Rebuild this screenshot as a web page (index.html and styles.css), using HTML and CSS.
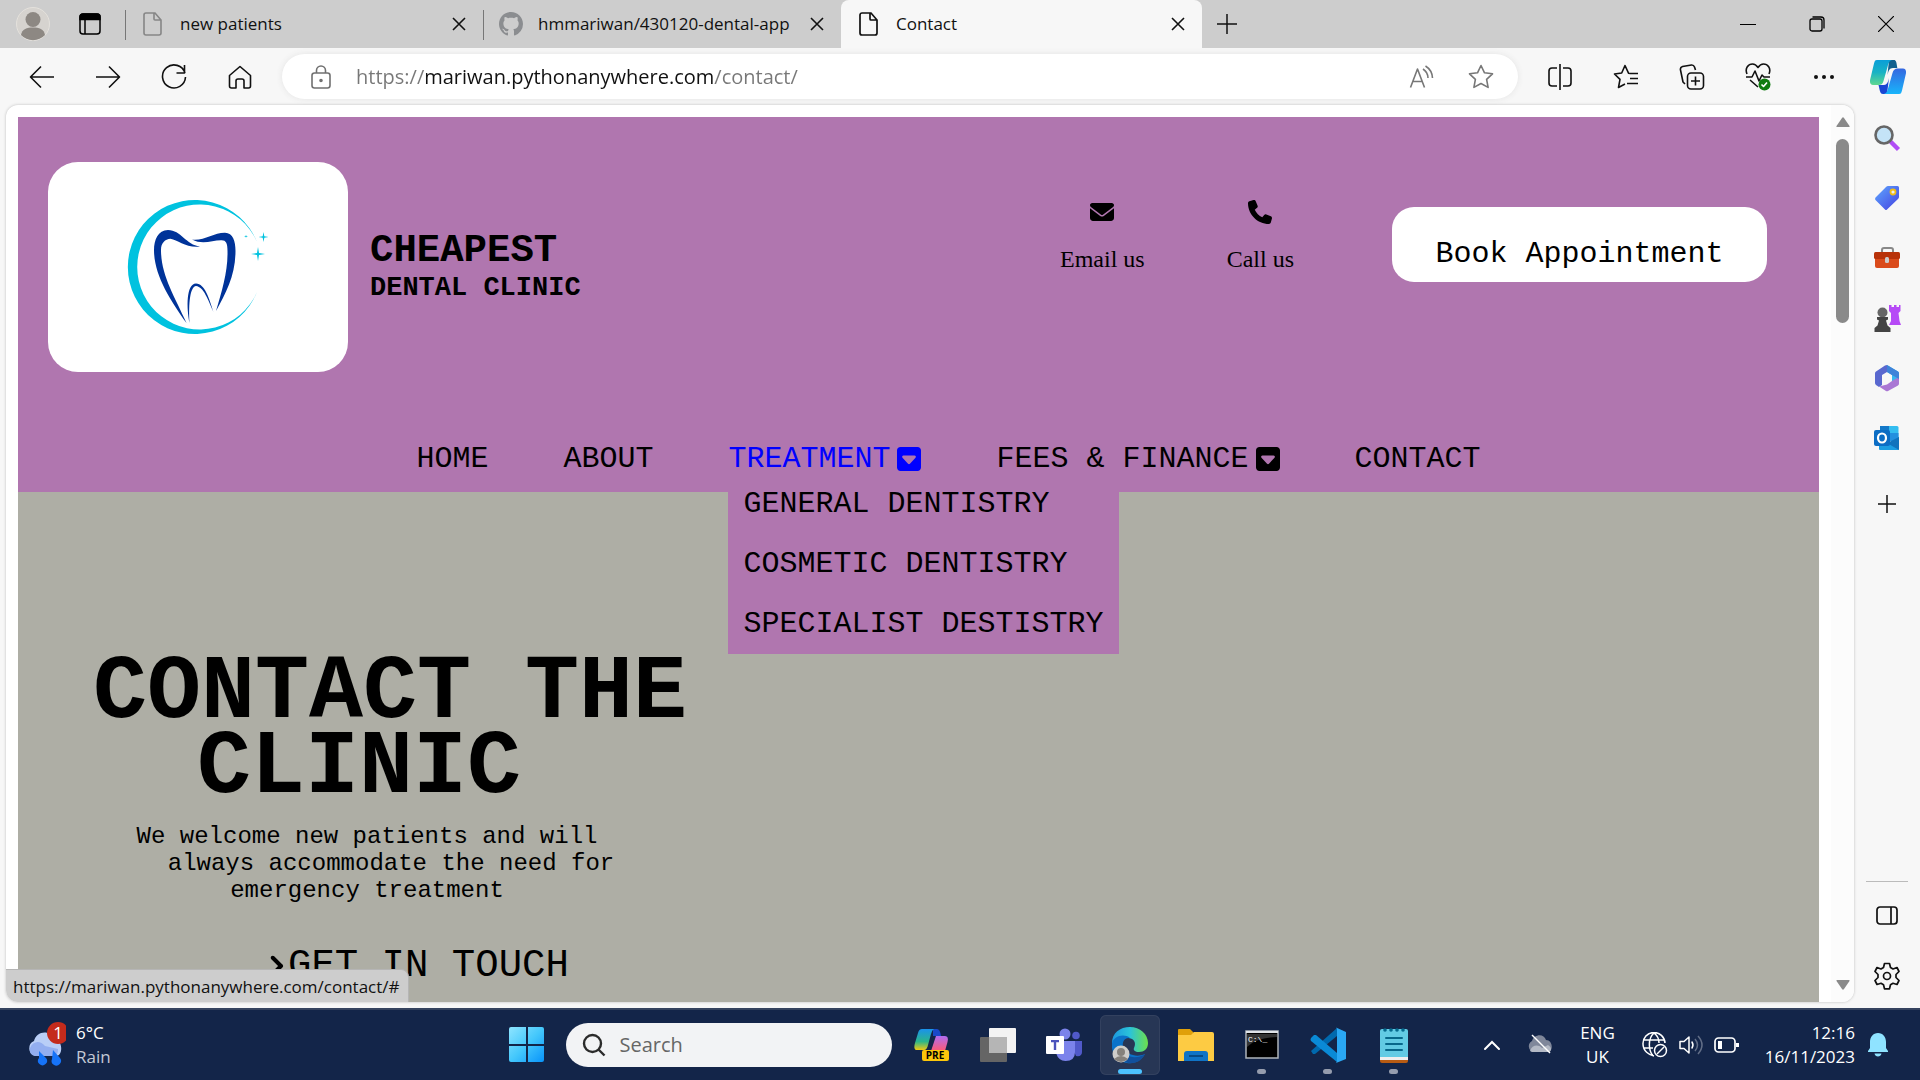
FILE: index.html
```html
<!DOCTYPE html>
<html lang="en">
<head>
<meta charset="utf-8">
<meta name="viewport" content="width=device-width, initial-scale=1">
<title>Contact</title>
<link rel="stylesheet" href="styles.css">
</head>
<body>
<div class="titlebar">
  <div class="title-tools">
    <button class="profile" aria-label="Profile">
      <svg width="34" height="34" viewBox="0 0 34 34"><circle cx="17" cy="17" r="16.500" fill="#d6d3cf" stroke="#e4e1dc"/><circle cx="17" cy="12.500" r="7.500" fill="#8d8883"/><path d="M5 28c1-6 6-7.500 12-7.500S28 22 29 28a16.500 16.500 0 0 1-24 0z" fill="#8d8883"/></svg>
    </button>
    <button class="tab-menu" aria-label="Tab actions">
      <svg width="22" height="22" viewBox="0 0 22 22" fill="none" stroke="#000" stroke-width="1.500"><rect x="1" y="1" width="20" height="20" rx="3"/><path d="M1 4a3 3 0 0 1 3-3h14a3 3 0 0 1 3 3v2.500H1z" fill="#000"/><path d="M6 6v15"/></svg>
    </button>
  </div>
  <div class="tab">
    <svg class="tab-icon" width="24" height="24" viewBox="0 0 24 24" fill="none" stroke="#868686" stroke-width="1.600"><path d="M5 1h9l6 7v13a2 2 0 0 1-2 2H5a2 2 0 0 1-2-2V3a2 2 0 0 1 2-2zM13 1v6a1 1 0 0 0 1 1h6"/></svg>
    <span class="tab-name">new patients</span>
    <button class="tab-close" aria-label="Close new patients"><svg width="14" height="14" viewBox="0 0 14 14" stroke="#111" stroke-width="1.600"><path d="M1 1l12 12M13 1L1 13"/></svg></button>
  </div>
  <div class="tab tab-last">
    <svg class="tab-icon" width="24" height="24" viewBox="0 0 16 16" fill="#8b8d90"><path d="M8 0C3.580 0 0 3.580 0 8c0 3.540 2.290 6.530 5.470 7.590.4.070.55-.17.55-.38 0-.19-.01-.82-.01-1.490-2.010.37-2.530-.49-2.690-.94-.09-.23-.48-.94-.82-1.130-.28-.15-.68-.52-.01-.53.63-.01 1.080.58 1.230.82.72 1.210 1.870.87 2.330.66.07-.52.28-.87.51-1.070-1.780-.2-3.640-.89-3.640-3.950 0-.87.31-1.590.82-2.150-.08-.2-.36-1.020.08-2.120 0 0 .67-.21 2.200.82.64-.18 1.320-.27 2-.27s1.360.09 2 .27c1.530-1.040 2.200-.82 2.200-.82.44 1.100.16 1.920.08 2.120.51.56.82 1.270.82 2.150 0 3.070-1.870 3.750-3.650 3.950.29.25.54.73.54 1.480 0 1.070-.01 1.930-.01 2.200 0 .21.15.46.55.38A8.010 8.010 0 0 0 16 8c0-4.420-3.580-8-8-8z"/></svg>
    <span class="tab-name">hmmariwan/430120-dental-app</span>
    <button class="tab-close" aria-label="Close hmmariwan"><svg width="14" height="14" viewBox="0 0 14 14" stroke="#111" stroke-width="1.600"><path d="M1 1l12 12M13 1L1 13"/></svg></button>
  </div>
  <div class="tab tab-active">
    <svg class="tab-icon" width="24" height="24" viewBox="0 0 24 24" fill="none" stroke="#111" stroke-width="1.700"><path d="M5 1h9l6 7v13a2 2 0 0 1-2 2H5a2 2 0 0 1-2-2V3a2 2 0 0 1 2-2zM13 1v6a1 1 0 0 0 1 1h6"/></svg>
    <span class="tab-name">Contact</span>
    <button class="tab-close" aria-label="Close Contact"><svg width="14" height="14" viewBox="0 0 14 14" stroke="#111" stroke-width="1.600"><path d="M1 1l12 12M13 1L1 13"/></svg></button>
  </div>
  <button class="new-tab" aria-label="New tab"><svg width="22" height="22" viewBox="0 0 22 22" stroke="#111" stroke-width="1.500"><path d="M11 1v20M1 11h20"/></svg></button>
  <div class="window-buttons">
    <button aria-label="Minimise"><svg width="16" height="16" viewBox="0 0 16 16" stroke="#000"><path d="M0 8.500h16"/></svg></button>
    <button aria-label="Restore"><svg width="16" height="16" viewBox="0 0 16 16" fill="none" stroke="#000" stroke-width="1.300"><rect x="1" y="3" width="12" height="12" rx="2"/><path d="M3.500 1H12a3 3 0 0 1 3 3v8.500"/></svg></button>
    <button aria-label="Close window"><svg width="16" height="16" viewBox="0 0 16 16" stroke="#000" stroke-width="1.200"><path d="M0 0l16 16M16 0L0 16"/></svg></button>
  </div>
</div>

<div class="toolbar">
  <button class="tool" aria-label="Back"><svg width="26" height="24" viewBox="0 0 26 24"><path d="M25 12H2M12 1.500L1.500 12 12 22.500"/></svg></button>
  <button class="tool" aria-label="Forward"><svg width="26" height="24" viewBox="0 0 26 24"><path d="M1 12h23M14 1.500L24.500 12 14 22.500"/></svg></button>
  <button class="tool" aria-label="Refresh"><svg width="26" height="26" viewBox="0 0 26 26"><path d="M24 9A11.500 11.500 0 1 0 24.500 13M23.500 1v8h-8"/></svg></button>
  <button class="tool" aria-label="Home"><svg width="24" height="24" viewBox="0 0 24 24"><path d="M1.500 10.500L12 1.500l10.500 9V21a2 2 0 0 1-2 2H16v-7a2 2 0 0 0-2-2h-4a2 2 0 0 0-2 2v7H3.500a2 2 0 0 1-2-2z"/></svg></button>
  <form class="address" onsubmit="return false">
    <svg class="lock" width="20" height="24" viewBox="0 0 20 24" fill="none" stroke="#707070" stroke-width="1.600"><rect x="1" y="8" width="18" height="15" rx="2.500"/><path d="M5.500 8V5.500a4.500 4.500 0 0 1 9 0V8"/><circle cx="10" cy="15.500" r="1" fill="#707070"/></svg>
    <input class="url" type="text" aria-label="Address" value="https://mariwan.pythonanywhere.com/contact/">
    <button class="address-button" aria-label="Read aloud"><svg width="26" height="24" viewBox="0 0 26 24"><path d="M1.500 22.500L8.500 4l7 18.500M4 16.500h9M14 4a11 11 0 0 1 5 9M16.500 1a15 15 0 0 1 7 12"/></svg></button>
    <button class="address-button" aria-label="Add to favourites"><svg width="26" height="26" viewBox="0 0 26 26"><path d="M13 1.500l3.500 7.300 8 1-5.900 5.600 1.500 8-7.100-3.900-7.100 3.900 1.500-8L1.500 9.800l8-1z"/></svg></button>
  </form>
  <button class="tool" aria-label="Split screen"><svg width="24" height="26" viewBox="0 0 24 26"><path d="M12 0v26M9 4H4a3 3 0 0 0-3 3v12a3 3 0 0 0 3 3h5M15 4h5a3 3 0 0 1 3 3v12a3 3 0 0 1-3 3h-5"/></svg></button>
  <button class="tool" aria-label="Favourites"><svg width="26" height="26" viewBox="0 0 26 26"><path d="M17 9.500l-1.500-.3L12 1.500 8.700 9 1.500 10l5.500 5.400-1.500 8.100L12 20M17 9.500h8M17 14.500h8M14 19.500h11"/></svg></button>
  <button class="tool" aria-label="Collections"><svg width="26" height="26" viewBox="0 0 26 26"><path d="M6 20l-2-2L1.500 6a3 3 0 0 1 2-3.500l9-1.500a3 3 0 0 1 3 2l1 3"/><rect x="8.500" y="9" width="16" height="16" rx="3.500"/><path d="M16.500 12.500v9M12 17h9"/></svg></button>
  <button class="tool" aria-label="Browser essentials"><svg width="26" height="28" viewBox="0 0 26 28"><path d="M2 11C-.5 5 3.500 1 7.500 1c3 0 4.500 2 5.500 3.500C14 3 15.500 1 18.500 1c4 0 8 4 5.500 10M1 14h6l3-6 4 10 3-6 2 2h6M5 17l8 7"/><circle cx="19.500" cy="21.500" r="6" fill="#107c10" stroke="none"/><path d="M16.500 21.500l2 2 3.500-4" stroke="#fff"/></svg></button>
  <button class="tool" aria-label="Settings and more"><svg width="22" height="6" viewBox="0 0 22 6"><g fill="#111" stroke="none"><circle cx="3" cy="3" r="2"/><circle cx="11" cy="3" r="2"/><circle cx="19" cy="3" r="2"/></g></svg></button>
  <button class="copilot" aria-label="Copilot"><svg width="36" height="34" viewBox="0 0 36 34"><defs><linearGradient id="ca" x1="0" y1="0" x2="0" y2="1"><stop offset="0" stop-color="#0a9ed8"/><stop offset=".5" stop-color="#19b3c4"/><stop offset="1" stop-color="#60d890"/></linearGradient><linearGradient id="cb" x1="0" y1="0" x2="0" y2="1"><stop offset="0" stop-color="#3567e0"/><stop offset="1" stop-color="#18b5fb"/></linearGradient></defs><path d="M19 0h5c2 0 2.500 2 3.300 8H23c-4 0-4.500 3-5.500 7z" fill="#10608f"/><path d="M17 34h-4c-3 0-3-3-4.500-9H14c3 0 4-3 5-7z" fill="#1b46d3"/><path d="M7 0h15c-3 1-3.700 4-4.500 7l-4 14c-.8 3-2.500 4-5 4H3c-3 0-3.500-3-2.700-6L4 3.500C4.700 1 5 0 7 0z" fill="url(#ca)"/><path d="M29 34H14c3-1 3.700-4 4.500-7l4-14c.8-3 2.500-4.500 5-4.500H33c3 0 3.500 3 2.700 6L32 30.500C31.300 33 31 34 29 34z" fill="url(#cb)"/></svg></button>
</div>

<div class="workspace">
  <div class="viewport">
    <div class="document">
      <header class="site-header">
        <div class="header-top">
          <a class="logo" href="#" aria-label="Cheapest Dental Clinic">
            <svg width="300" height="210" viewBox="0 -1 300 210"><path fill="#00c2df" d="M209 79A67 67 0 1 0 209 129A62.500 62.500 0 1 1 209 79Z"/><g fill="#003399"><path d="M152 83.500C138 82 133 67 120 67C110 67 106 77 106 87C106 112 122 137 138.500 160C126 132 113 112 113 87C113 80 117 76 122.500 75.700C130 77 138 85 152 83.500Z"/><path d="M144 76.500C156 78 166 69.500 177 69.700C185 70 187.500 78 187.500 88C187.500 112 178 130 168 148C174 128 180 108 179.500 88C179.500 80 178 77 173 77.300C164 77.500 154 82 144 76.500Z"/><path d="M141.500 160C138.500 145 138 121 148 120.500C157 121 161 135 165.500 149C160 137 156 124 148 123C142 124 140.500 140 141.500 160Z"/></g><path fill="#00c2df" d="M210 84l1 6 6 1-6 1-1 6-1-6-6-1 6-1zM215.500 69l.8 4.200 4.200.8-4.200.8-.8 4.200-.8-4.200-4.200-.8 4.200-.8zM198 72l.5 1 1.500.3-1.500.4-.5 1-.5-1-1.500-.4 1.500-.3z"/></svg>
          </a>
          <div class="brand"><span class="brand-name">CHEAPEST</span><span class="brand-kind">DENTAL CLINIC</span></div>
          <div class="contacts">
            <a class="contact" href="#"><svg width="24" height="24" viewBox="0 0 512 512"><path d="M48 64C21.500 64 0 85.500 0 112c0 15.100 7.100 29.300 19.200 38.400L236.800 313.600c11.400 8.500 27 8.500 38.400 0L492.800 150.400c12.100-9.100 19.200-23.300 19.200-38.400c0-26.500-21.500-48-48-48H48zM0 176V384c0 35.300 28.700 64 64 64H448c35.300 0 64-28.700 64-64V176L294.400 339.200c-22.800 17.100-54 17.100-76.800 0L0 176z"/></svg>Email us</a>
            <a class="contact" href="#"><svg width="24" height="24" viewBox="0 0 512 512"><path d="M164.900 24.600c-7.700-18.600-28-28.500-47.400-23.200l-88 24C12.100 30.200 0 46 0 64C0 311.400 200.600 512 448 512c18 0 33.800-12.100 38.600-29.500l24-88c5.300-19.400-4.600-39.700-23.200-47.400l-96-40c-16.300-6.800-35.200-2.100-46.300 11.600L304.700 368C234.300 334.700 177.300 277.700 144 207.300L193.300 167c13.700-11.200 18.400-30 11.600-46.300l-40-96z"/></svg>Call us</a>
          </div>
          <button class="book">Book Appointment</button>
        </div>
        <nav class="menu">
          <a href="#">HOME</a>
          <a href="#">ABOUT</a>
          <div class="menu-group">
            <a class="menu-open" href="#">TREATMENT<svg width="24" height="24" viewBox="0 32 448 448"><path d="M384 480c35.300 0 64-28.700 64-64l0-320c0-35.300-28.700-64-64-64L64 32C28.700 32 0 60.700 0 96L0 416c0 35.300 28.700 64 64 64l320 0zM224 352c-6.700 0-13-2.800-17.600-7.700l-104-112c-6.500-7-8.200-17.200-4.400-25.900s12.500-14.400 22-14.400l208 0c9.500 0 18.200 5.700 22 14.400s2.100 18.900-4.400 25.900l-104 112c-4.500 4.900-10.900 7.700-17.600 7.700z"/></svg></a>
            <div class="dropdown">
              <a href="#">GENERAL DENTISTRY</a>
              <a href="#">COSMETIC DENTISTRY</a>
              <a href="#">SPECIALIST DESTISTRY</a>
            </div>
          </div>
          <a href="#">FEES &amp; FINANCE<svg width="24" height="24" viewBox="0 32 448 448"><path d="M384 480c35.300 0 64-28.700 64-64l0-320c0-35.300-28.700-64-64-64L64 32C28.700 32 0 60.700 0 96L0 416c0 35.300 28.700 64 64 64l320 0zM224 352c-6.700 0-13-2.800-17.600-7.700l-104-112c-6.500-7-8.200-17.200-4.400-25.900s12.500-14.400 22-14.400l208 0c9.500 0 18.200 5.700 22 14.400s2.100 18.900-4.400 25.900l-104 112c-4.500 4.900-10.900 7.700-17.600 7.700z"/></svg></a>
          <a href="#">CONTACT</a>
        </nav>
      </header>
      <main class="hero">
        <h1><span class="title-lead">CONTACT THE</span><span>CLINIC</span></h1>
        <p class="intro"><span>We welcome new patients and will</span><span class="intro-inset">always accommodate the need for</span><span>emergency treatment</span></p>
        <a class="touch" href="#"><svg width="14" height="22" viewBox="60 0 270 512"><path d="M310.600 233.400c12.500 12.500 12.500 32.800 0 45.300l-192 192c-12.500 12.500-32.800 12.500-45.300 0s-12.500-32.800 0-45.300L242.700 256 73.400 86.600c-12.500-12.500-12.500-32.800 0-45.300s32.800-12.500 45.300 0l192 192z"/></svg>GET IN TOUCH</a>
      </main>
    </div>
    <div class="scrollbar"><svg width="14" height="10" viewBox="0 0 14 10" fill="#8a8a8a"><path d="M6 1q1-1.500 2 0l5.500 8q.4 1-.6 1H1.100Q.1 10 .5 9z"/></svg><div class="thumb"></div><svg width="14" height="10" viewBox="0 0 14 10" fill="#8a8a8a"><path d="M6 9q1 1.500 2 0l5.500-8q.4-1-.6-1H1.100Q.1 0 .5 1z"/></svg></div>
    <div class="status">https://mariwan.pythonanywhere.com/contact/#</div>
  </div>

  <aside class="sidebar">
    <button aria-label="Search"><svg width="28" height="28" viewBox="0 0 28 28"><path d="M17.500 17.500l8 8" stroke="#b04df5" stroke-width="4.500"/><circle cx="11" cy="11" r="8.500" fill="#c4e3f7" stroke="#666" stroke-width="2.600"/></svg></button>
    <button aria-label="Shopping"><svg width="28" height="28" viewBox="0 0 28 28"><defs><linearGradient id="tg" x1="0" y1="0" x2="1" y2="1"><stop offset="0" stop-color="#5fa8ff"/><stop offset="1" stop-color="#4340e0"/></linearGradient></defs><path d="M15 2h9.500A1.500 1.500 0 0 1 26 3.500V13q0 1-1 2L14 25.500q-1 1-2 0L2.500 16q-1-1 0-2.500L13 3q1-1 2-1z" fill="url(#tg)"/><circle cx="20" cy="8" r="2.500" fill="#eee" stroke="#f2bd17" stroke-width="1.800"/></svg></button>
    <button aria-label="Tools"><svg width="28" height="28" viewBox="0 0 28 28"><path d="M9 9V6q0-2 2-2h7q2 0 2 2v3" fill="none" stroke="#888" stroke-width="2"/><path d="M2 13h24v9q0 2-2 2H4q-2 0-2-2z" fill="#da4b1b"/><rect x="1" y="8" width="26" height="7" rx="1.500" fill="#b83209"/><rect x="12" y="13" width="4" height="6" rx="1.500" fill="#ccc"/></svg></button>
    <button aria-label="Games"><svg width="28" height="28" viewBox="0 0 28 28"><path d="M16 1h2.500v2h2.500V1h2.500v2H26V1h1.500v6l-2 2 1 8 1.500 4H16l2-4V9l-2-2z" fill="#b64af6"/><circle cx="9.500" cy="8.500" r="5" fill="#666"/><path d="M4 13h11v2.500l-2 1 1.500 5 3 2.500v4h-16v-4l3-2.500L6 16.500l-2-1z" fill="#444"/></svg></button>
    <button aria-label="Microsoft 365"><svg width="28" height="28" viewBox="0 0 28 28"><path d="M14 1l11 6.500q1 .5 1 2v10L19 17v-6l-5-3z" fill="#38b7ee"/><path d="M14 1v7l-5 3v10l-3 2-3-2q-1-1-1-2V9.500q0-1.500 1-2L12 1.500q1-.5 2-.5z" fill="#5968cf"/><path d="M26 13v6.500q0 1.500-1 2L15 27q-1 .5-2 0l-7-4.500 8-2 5-3.500z" fill="#aa77d4"/><path d="M14 1v7l5 3 7 4V9q0-1-1-1.500z" fill="#3f83d9"/></svg></button>
    <button aria-label="Outlook"><svg width="28" height="28" viewBox="0 0 28 28"><path d="M7 2h17q1.500 0 1.500 1.500V17H7z" fill="#34bdf0"/><path d="M7 2h9v7H7z" fill="#1479c9"/><path d="M16 9h9.500v8H16z" fill="#2390df"/><path d="M6 17l10 2 10-6v12q0 1-1 1H7q-1 0-1-1z" fill="#1b9de2"/><path d="M14 19l12 7V13z" fill="#1173bd"/><rect x="1" y="6" width="16" height="16" rx="2" fill="#0c6dc4"/><ellipse cx="9" cy="14" rx="4" ry="4.500" fill="none" stroke="#fff" stroke-width="2.200"/></svg></button>
    <button class="customise" aria-label="Customise"><svg width="20" height="20" viewBox="0 0 20 20" stroke="#111" stroke-width="1.500"><path d="M10 1v18M1 10h18"/></svg></button>
    <div class="side-rule"></div>
    <button aria-label="Hide sidebar"><svg width="22" height="20" viewBox="0 0 22 20" fill="none" stroke="#111" stroke-width="1.700"><rect x="1" y="1" width="20" height="17" rx="3"/><path d="M15 1v17"/></svg></button>
    <button aria-label="Settings"><svg width="26" height="28" viewBox="0 0 26 28" fill="none" stroke="#111" stroke-width="1.700" stroke-linejoin="round"><path d="M10.500 1.500h5l1 4 2.500 1.500 4-1.500L25 9.500 22 12.500v3l3 3-2 4-4-1.200-2.500 1.500-1 4h-5l-1-4L7 21.300 3 22.500l-2-4 3-3v-3l-3-3 2-4L7 7l2.500-1.500z"/><circle cx="13" cy="14" r="3.500"/></svg></button>
  </aside>
</div>

<footer class="taskbar">
  <button class="weather">
    <svg width="38" height="46" viewBox="0 0 38 46"><path d="M7 34a8 8 0 0 1-1-15C8 9 22 7 26 17c8 0 10 15 3 17z" fill="#b9cef7"/><path d="M2 26c3-7 10-8 15-2l13 3c0 4-1 6-4 7H8c-4 0-7-3-6-8z" fill="#93aef0"/><path d="M11 29l7 7a4.500 4.500 0 1 1-7 0zM25 28l7 8a4.700 4.700 0 1 1-8 1z" fill="#1673f8"/><circle cx="30" cy="11" r="11" fill="#c42b1c"/><text x="30" y="17" fill="#fff" font-size="17" text-anchor="middle">1</text></svg>
    <span class="weather-text"><span>6°C</span><span class="faint">Rain</span></span>
  </button>
  <div class="apps">
    <button class="start" aria-label="Start"><svg width="36" height="36" viewBox="0 0 36 36"><defs><linearGradient id="wg" x1="0" y1="0" x2="1" y2="1"><stop offset="0" stop-color="#8fe5ff"/><stop offset=".5" stop-color="#45c8fc"/><stop offset="1" stop-color="#0894fa"/></linearGradient></defs><path fill="url(#wg)" d="M2 0h15v17H0V2q0-2 2-2zM19 0h14q2 0 2 2v15H19zM0 19h17v16H2q-2 0-2-2zM19 19h16v14q0 2-2 2H19z"/></svg></button>
    <label class="search"><svg width="24" height="24" viewBox="0 0 24 24" fill="none" stroke="#2b2b2b" stroke-width="2.400"><circle cx="10.500" cy="10.500" r="8.500"/><path d="M16.500 16.500l6 6"/></svg><input type="text" placeholder="Search" aria-label="Search"></label>
    <button class="app" aria-label="Copilot preview"><svg width="36" height="36" viewBox="0 0 36 36"><defs><linearGradient id="pa" x1="0" y1="0" x2="0" y2="1"><stop offset="0" stop-color="#1a92ec"/><stop offset=".6" stop-color="#2bb58a"/><stop offset="1" stop-color="#f2c811"/></linearGradient><linearGradient id="pb" x1="0" y1="0" x2="0" y2="1"><stop offset="0" stop-color="#b06cf0"/><stop offset="1" stop-color="#ff5a72"/></linearGradient></defs><path d="M19 2h4q3 0 4 7h-8z" fill="#1949c8"/><path d="M8 2h12q-2 1-3 5l-3 11q-1 5-4 5H3q-4 0-2-7L4 6q1-4 4-4z" fill="url(#pa)"/><path d="M22 9h9q4 0 2.500 6L31 24H17z" fill="url(#pb)"/><rect x="8" y="23" width="27" height="11" rx="2" fill="#fcc70b"/><text x="21" y="32" text-anchor="middle" font-size="10" font-weight="bold">PRE</text></svg></button>
    <button class="app" aria-label="Task view"><svg width="36" height="36" viewBox="0 0 36 36"><rect y="10" width="27" height="25" rx="1" fill="#656565"/><rect x="9" y="1" width="27" height="25" rx="1" fill="#f3f3f3"/><path d="M9 10h18v16H9z" fill="#b5b5b5"/></svg></button>
    <button class="app" aria-label="Teams"><svg width="36" height="36" viewBox="0 0 36 36"><circle cx="19" cy="7" r="5.500" fill="#7b83eb"/><circle cx="30" cy="8.500" r="3.800" fill="#5059c9"/><path d="M23 14h13v11q0 5-6 4z" fill="#5059c9"/><path d="M10 14h19v11q0 9-9.500 9-7 0-9.500-8z" fill="#7b83eb"/><rect y="9" width="18" height="18" rx="1" fill="#fff"/><path d="M5 13h8v2.300h-2.800V23H7.800v-7.700H5z" fill="#4b53bc"/></svg></button>
    <button class="app app-active" aria-label="Edge"><svg width="38" height="38" viewBox="0 0 38 38"><defs><linearGradient id="eg"><stop offset="0" stop-color="#1c97e0"/><stop offset=".5" stop-color="#2bc3d9"/><stop offset="1" stop-color="#6de04b"/></linearGradient></defs><path d="M1 17C1 7 9 1 19 1c10 0 18 7 18 16 0 6-4 9-9 9-4 0-6-2-5-4 3-6-1-10-6-10S2 14 1 19z" fill="url(#eg)"/><path d="M1 18c1-8 12-11 18-6-6-1-9 5-6 11 3 5 12 9 21 5-4 7-11 10-18 9C7 36 0 28 1 18z" fill="#0b72c9"/><path d="M13 20c-1 10 10 15 21 8-4 8-11 10-17 9-6-2-9-11-4-17z" fill="#11509c"/><circle cx="10" cy="28" r="8.500" fill="#cfcdca"/><circle cx="10" cy="26" r="4" fill="#85817c"/><path d="M3 33q7-6 14 0-7 6-14 0z" fill="#85817c"/></svg></button>
    <button class="app" aria-label="File Explorer"><svg width="36" height="36" viewBox="0 0 36 36"><path d="M0 3q0-1 1-1h11l4 4v8H0z" fill="#e0a009"/><path d="M0 8h13l3-3h18q2 0 2 2v27H0z" fill="#fdcb43"/><path d="M6 34V27q0-3 3-3h18q3 0 3 3v7z" fill="#1074c6"/><path d="M11 29h14" stroke="#084b85" stroke-width="2"/></svg></button>
    <button class="app app-open" aria-label="Command Prompt"><svg width="36" height="36" viewBox="0 0 36 36"><rect x="2" y="4" width="32" height="27" fill="#000" stroke="#aeb4ba" stroke-width="1.500"/><path d="M2 4h32v2H2z" fill="#dfe3e8"/><path d="M3 7h30v3Q12 11 3 20z" fill="#333"/><text class="prompt" x="4" y="15" font-size="8" fill="#fff">C:\_</text></svg></button>
    <button class="app app-open" aria-label="Visual Studio Code"><svg width="36" height="36" viewBox="0 0 36 36"><path d="M1 24l2 3h2L27 9V1z" fill="#0069ae"/><path d="M1 11l3-3h2l21 18v9L1 14q-1-1 0-3z" fill="#0a8ad6"/><path d="M26 .5L36 5v27l-10 4q1-1 1-3V3q0-2-1-2.500z" fill="#2aa8f4"/></svg></button>
    <button class="app app-open" aria-label="Notepad"><svg width="36" height="36" viewBox="0 0 36 36"><path d="M4 30h28v4q0 2-2 2H6q-2 0-2-2z" fill="#b75b13"/><path d="M4 27h28v6H4z" fill="#eee"/><path d="M6 2h24q2 0 2 2v26H4V4q0-2 2-2z" fill="#62cbe4"/><path d="M10 11h16M10 17h16M10 23h16" stroke="#07688b" stroke-width="2" stroke-linecap="round"/><g fill="#066a8e"><circle cx="9" cy="3" r="1.800"/><circle cx="15" cy="3" r="1.800"/><circle cx="21" cy="3" r="1.800"/><circle cx="27" cy="3" r="1.800"/></g></svg></button>
  </div>
  <div class="tray">
    <button aria-label="Hidden icons"><svg width="18" height="12" viewBox="0 0 18 12" fill="none" stroke="#fff" stroke-width="2" stroke-linecap="round"><path d="M2 10l7-7 7 7"/></svg></button>
    <button class="cloud" aria-label="OneDrive"><svg width="26" height="22" viewBox="0 0 26 22"><path d="M6 18a6 6 0 0 1-1-11C7 0 17-1 19 6c7 0 8 12 1 12z" fill="#7f879a"/><path d="M3 17c2-6 8-7 12-3l6-3c4 2 4 7 0 7H5z" fill="#b3b9c5"/><path d="M5 1l18 18" stroke="#fff" stroke-width="1.500"/></svg></button>
    <button class="language"><span>ENG</span><span>UK</span></button>
    <button class="system" aria-label="Network, volume and battery">
      <svg width="26" height="26" viewBox="0 0 26 26" fill="none" stroke="#fff" stroke-width="1.500"><path d="M12 24C7 23 1 19 1 12a11 11 0 0 1 22-1M2 8h20M2 16h9M11 24C6 18 6 6 12 1c4 3 5 6 5 10"/><circle cx="18.500" cy="18.500" r="6"/><path d="M15 22l7-7"/></svg>
      <svg width="26" height="22" viewBox="0 0 26 22" fill="none" stroke="#fff" stroke-width="1.500" stroke-linejoin="round"><path d="M2 7.500h4L11 3v16l-5-4.500H2z"/><path d="M14 8q2 3 0 6" stroke-linecap="round"/><path d="M17 5q5 6 0 12M20 2q8 9 0 18" stroke="#626e87"/></svg>
      <svg width="26" height="18" viewBox="0 0 26 18" fill="none" stroke="#fff" stroke-width="1.700"><rect x="1" y="2" width="20" height="14" rx="3.500"/><path d="M4 5h4v8H4z" fill="#fff" stroke="none"/><path d="M23.500 7v4" stroke-width="3"/></svg>
    </button>
    <button class="clock"><span>12:16</span><span>16/11/2023</span></button>
    <button class="bell" aria-label="Notifications"><svg width="20" height="24" viewBox="0 0 20 24" fill="#8fe3ff"><path d="M10 0c5 0 8 4 8 9v6l2 3v1H0v-1l2-3V9c0-5 3-9 8-9zM6.500 20.500h7c-.5 4-6.500 4-7 0z"/></svg></button>
  </div>
</footer>
</body>
</html>
```
FILE: styles.css
```css
* {
  box-sizing: border-box;
}

body {
  margin: 0;
  height: 100vh;
  display: flex;
  flex-direction: column;
  overflow: hidden;
  background: #f7f7f7;
  color: #111;
  font: 17px/24px "Open Sans", "Noto Sans", sans-serif;
}

button {
  margin: 0;
  padding: 0;
  border: 0;
  background: none;
  color: inherit;
  font: inherit;
  display: flex;
  align-items: center;
  justify-content: center;
}

a {
  color: inherit;
  text-decoration: none;
}

svg {
  display: block;
  flex: none;
}

/* Browser tabs */
.titlebar {
  flex: none;
  height: 48px;
  display: flex;
  background: #cdcdcd;
}

.title-tools {
  width: 125px;
  padding-left: 16px;
  display: flex;
  align-items: center;
  gap: 29px;
}

.tab {
  width: 358px;
  padding: 0 12px 0 16px;
  display: flex;
  align-items: center;
  gap: 15px;
  position: relative;
}

.tab::before {
  content: "";
  position: absolute;
  left: 0;
  top: 10px;
  width: 1px;
  height: 30px;
  background: #777;
}

.tab-active {
  width: 361px;
  border-radius: 8px 8px 0 0;
  background: #f7f7f7;
}

.tab-active::before {
  display: none;
}

.tab-name {
  flex: 1;
  white-space: nowrap;
}

.tab-close {
  width: 24px;
  height: 24px;
}

.new-tab {
  width: 50px;
}

.window-buttons {
  margin-left: auto;
  display: flex;
}

.window-buttons button {
  width: 69px;
}

/* Address bar and tools */
.toolbar {
  flex: none;
  height: 57px;
  padding: 0 2px 0 9px;
  display: flex;
  align-items: center;
}

.tool {
  width: 66px;
  height: 44px;
}

.tool svg {
  fill: none;
  stroke: #111;
  stroke-width: 1.6;
  stroke-linejoin: round;
}

.copilot {
  width: 61px;
}

.address {
  flex: 1;
  height: 45px;
  margin: 0 9px;
  padding: 0 8px 0 29px;
  display: flex;
  align-items: center;
  border-radius: 23px;
  background: #fff;
  box-shadow: 0 0 6px #e4e4e4;
}

.url {
  flex: 1;
  margin: 0 0 0 25px;
  padding: 0;
  border: 0;
  outline: 0;
  color: #111;
  font: 20px/28px "Open Sans", "Noto Sans", sans-serif;
  background: linear-gradient(90deg, #777 70px, #111 70px, #111 357px, #777 357px);
  background-clip: text;
  -webkit-background-clip: text;
  -webkit-text-fill-color: transparent;
}

.address-button {
  width: 59px;
  height: 40px;
}

.address-button svg {
  fill: none;
  stroke: #777;
  stroke-width: 1.6;
  stroke-linejoin: round;
}

/* Web page area */
.workspace {
  flex: 1;
  min-height: 0;
  display: flex;
}

.viewport {
  flex: 1;
  min-width: 0;
  margin: 0 0 6px 6px;
  display: flex;
  position: relative;
  overflow: hidden;
  border-radius: 12px;
  background: #fff;
  box-shadow: 0 0 3px #bbb;
}

.document {
  flex: 1;
  min-width: 0;
  padding: 12px 12px 0;
  display: flex;
  flex-direction: column;
  color: #000;
  font-family: "Liberation Mono", "Courier New", monospace;
}

.site-header {
  flex: none;
  padding: 45px 52px 16px 30px;
  background: #b076af;
}

.header-top {
  display: flex;
}

.logo {
  border-radius: 30px;
  background: #fff;
}

.brand {
  margin-left: 22px;
  padding-bottom: 2px;
  display: flex;
  flex-direction: column;
  justify-content: center;
  font-weight: bold;
}

.brand-name {
  font-size: 39px;
  line-height: 44px;
}

.brand-kind {
  font-size: 27px;
  line-height: 30px;
}

.contacts {
  margin: 38px 98px 0 auto;
  display: flex;
  align-items: flex-start;
  gap: 82px;
}

.contact {
  display: flex;
  flex-direction: column;
  align-items: center;
  gap: 22px;
  font: 24px/27px "Liberation Serif", "Times New Roman", serif;
}

.book {
  width: 375px;
  height: 75px;
  margin-top: 45px;
  padding-top: 19px;
  border-radius: 22px;
  background: #fff;
  font: 30px/34px "Liberation Mono", "Courier New", monospace;
}

.menu {
  margin: 70px 0 0;
  padding-left: 82px;
  display: flex;
  justify-content: center;
  gap: 75px;
  font-size: 30px;
  line-height: 34px;
}

.menu a {
  display: flex;
  align-items: center;
  gap: 7px;
  white-space: nowrap;
}

.menu-group {
  position: relative;
}

.menu .menu-open {
  color: #00f;
}

.menu svg,
.touch svg {
  fill: currentColor;
}

.touch svg {
  stroke: currentColor;
  stroke-width: 30;
}

.dropdown {
  position: absolute;
  top: calc(100% - 2px);
  left: 0;
  z-index: 1;
  padding: 0 15px;
  background: #b076af;
  line-height: 60px;
}

.hero {
  flex: 1;
  padding: 164px 0 0 2px;
  background: #aeaea5;
}

.hero h1 {
  width: 678px;
  margin: 0;
  text-align: center;
  font-size: 90px;
  line-height: 75px;
}

.hero h1 span,
.intro span {
  display: block;
}

.title-lead {
  padding-left: 62px;
}

.intro {
  width: 694px;
  margin: 17px 0 40px;
  text-align: center;
  font-size: 24px;
  line-height: 27px;
}

.intro-inset {
  padding-left: 48px;
}

.touch {
  padding-left: 250px;
  display: flex;
  align-items: center;
  gap: 4px;
  font-size: 39px;
  line-height: 44px;
}

.scrollbar {
  width: 23px;
  padding: 12px 0;
  display: flex;
  flex-direction: column;
  align-items: center;
  background: #fcfcfc;
}

.thumb {
  width: 13px;
  height: 184px;
  margin: 12px 0 auto;
  border-radius: 7px;
  background: #8a8a8a;
}

.status {
  position: absolute;
  left: 0;
  bottom: 0;
  padding: 5px 8px 3px 7px;
  border-top: 1px solid #b5b5b5;
  border-right: 1px solid #b5b5b5;
  border-radius: 0 8px 0 0;
  background: #cdcdcd;
}

/* Edge sidebar */
.sidebar {
  flex: none;
  width: 66px;
  padding: 3px 0 2px;
  display: flex;
  flex-direction: column;
  align-items: center;
}

.sidebar button {
  width: 44px;
  height: 60px;
}

.sidebar .customise {
  margin-top: 6px;
}

.side-rule {
  width: 42px;
  height: 1px;
  margin: auto 0 4px;
  background: #bbb;
}

/* Windows taskbar */
.taskbar {
  flex: none;
  height: 72px;
  padding: 0 32px 0 28px;
  display: grid;
  grid-template-columns: 1fr auto 1fr;
  align-items: center;
  border-top: 2px solid #35435f;
  background: #132549;
  color: #fff;
}

.weather {
  justify-self: start;
  gap: 10px;
}

.weather-text {
  display: flex;
  flex-direction: column;
  align-items: flex-start;
}

.faint {
  color: #c3c9d5;
}

.apps {
  padding-left: 16px;
  display: flex;
  align-items: center;
  gap: 6px;
}

.start {
  margin-right: 15px;
}

.search {
  width: 326px;
  height: 44px;
  margin-right: 4px;
  padding: 0 16px;
  display: flex;
  align-items: center;
  gap: 14px;
  border-radius: 22px;
  background: #f2f3f5;
}

.search input {
  flex: 1;
  min-width: 0;
  padding: 0;
  border: 0;
  outline: 0;
  background: none;
  color: #222;
  font: 20px/28px "Open Sans", "Noto Sans", sans-serif;
}

.search input::placeholder {
  color: #666;
}

.app {
  width: 60px;
  height: 60px;
  border-radius: 6px;
  position: relative;
}

.app-active {
  background: #273655;
  box-shadow: inset 0 0 0 1px #33415f;
}

.app-active::after,
.app-open::after {
  content: "";
  position: absolute;
  bottom: 1px;
  width: 9px;
  height: 5px;
  border-radius: 3px;
  background: #959cad;
}

.app-active::after {
  width: 24px;
  background: #4cc2ff;
}

.prompt {
  font-family: "Liberation Mono", monospace;
}

.tray {
  justify-self: end;
  display: flex;
  align-items: center;
}

.cloud {
  margin-left: 26px;
}

.language {
  margin-left: 27px;
  flex-direction: column;
}

.system {
  margin-left: 27px;
  gap: 10px;
}

.clock {
  margin-left: 25px;
  flex-direction: column;
  align-items: flex-end;
}

.bell {
  margin-left: 13px;
}
```
